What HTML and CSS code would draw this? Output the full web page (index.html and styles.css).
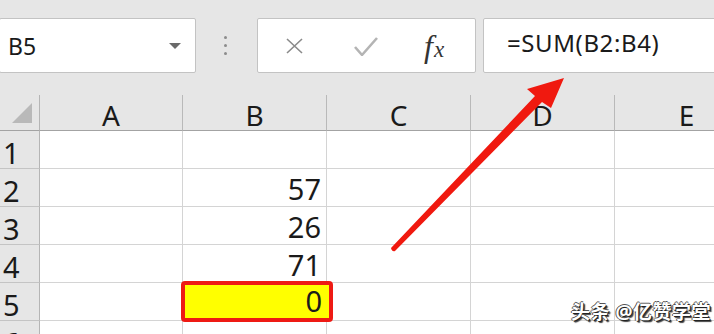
FILE: index.html
```html
<!DOCTYPE html>
<html lang="zh-CN">
<head>
	<meta charset="UTF-8">
	<title>SUM</title>
	<link rel="stylesheet" href="styles.css">
</head>
<body>
<div class="screen">
	<!-- 编辑栏 -->
	<div class="toolbar">
		<div class="namebox">
			<span>B5</span>
			<i class="caret"></i>
		</div>
		<div class="dots"><i></i><i></i><i></i></div>
		<div class="buttons">
			<svg class="btn" width="22" height="16" viewBox="0 0 22 16"><path d="M3 1 L18 15 M18 1 L3 15" stroke="#8a8a8a" stroke-width="1.6" fill="none"/></svg>
			<svg class="btn" width="26" height="20" viewBox="0 0 26 20"><path d="M2 11 L9 19 L24 2" stroke="#b4b4b4" stroke-width="2.6" fill="none" stroke-linejoin="round"/></svg>
			<span class="fx"><i>f</i><i class="x">x</i></span>
		</div>
		<div class="formula">=SUM(B2:B4)</div>
	</div>

	<!-- 表格 -->
	<div class="sheet">
		<div class="corner"><i></i></div>
		<div class="col">A</div>
		<div class="col">B</div>
		<div class="col">C</div>
		<div class="col">D</div>
		<div class="col">E</div>

		<div class="row">1</div><div class="cell"></div><div class="cell"></div><div class="cell"></div><div class="cell"></div><div class="cell"></div>
		<div class="row">2</div><div class="cell"></div><div class="cell num">57</div><div class="cell"></div><div class="cell"></div><div class="cell"></div>
		<div class="row">3</div><div class="cell"></div><div class="cell num">26</div><div class="cell"></div><div class="cell"></div><div class="cell"></div>
		<div class="row">4</div><div class="cell"></div><div class="cell num">71</div><div class="cell"></div><div class="cell"></div><div class="cell"></div>
		<div class="row">5</div><div class="cell"></div><div class="cell num active">0</div><div class="cell"></div><div class="cell"></div><div class="cell"></div>
		<div class="row">6</div><div class="cell"></div><div class="cell"></div><div class="cell"></div><div class="cell"></div><div class="cell"></div>
	</div>

	<!-- 红色箭头 -->
	<svg class="arrow" width="714" height="334" viewBox="0 0 714 334">
		<path d="M391 248 L535 96 L527 89 L564 78 L551 108 L542 102 L395 251 Q392 252 391 248 Z" fill="#f0190f"/>
	</svg>

	<div class="mark">头条 @亿赞学堂</div>
</div>
</body>
</html>
```

FILE: styles.css
```css
*{margin: 0;padding: 0;box-sizing: border-box;}
body{
	background: #fff;
	font-family: "Noto Sans", "Noto Sans CJK SC", sans-serif;
	color: #1a1a1a;
}
.screen{
	width: 714px;
	height: 334px;
	position: relative;
	overflow: hidden;
	background: #e6e6e6;
}

/*编辑栏*/
.toolbar{
	height: 95px;
	display: flex;
	padding-top: 18px;
}
.toolbar > div{
	height: 55px;
	background: #fff;
	border: 1px solid #c3c3c3;
	border-radius: 2px;
}
.namebox{
	width: 197px;
	margin-left: -1px;
	display: flex;
	align-items: center;
	justify-content: space-between;
	padding: 0 14px 0 8px;
	font-size: 23px;
}
.caret{
	width: 0;
	height: 0;
	border-left: 6px solid transparent;
	border-right: 6px solid transparent;
	border-top: 6px solid #6a6a6a;
}
.toolbar .dots{
	width: 61px;
	background: transparent;
	border: 0;
	display: flex;
	flex-direction: column;
	align-items: center;
	justify-content: center;
	gap: 5px;
	padding-right: 2px;
}
.dots i{
	width: 3px;
	height: 3px;
	border-radius: 50%;
	background: #8c8c8c;
}
.buttons{
	width: 219px;
	display: flex;
	align-items: center;
	padding-left: 26px;
}
.buttons .btn:nth-child(2){margin-left: 47px;}
.fx{
	margin-left: 45px;
	font-family: "Liberation Serif", serif;
	font-size: 32px;
	line-height: 1;
	color: #333;
}
.fx .x{font-size: 23px;margin-left: 1px;}
.formula{
	flex: 1;
	margin-left: 7px;
	margin-right: -6px;
	font-size: 24px;
	padding: 7px 0 0 23px;
	letter-spacing: 0.6px;
}

/*表格*/
.sheet{
	display: grid;
	grid-template-columns: 40px 143px 144px 144px 144px 144px;
	grid-template-rows: 36px repeat(6, 38px);
	background: #fff;
}
.corner,.col,.row{
	background: #e6e6e6;
}
.corner{
	border-right: 1px solid #b5b5b5;
	border-bottom: 1px solid #a3a3a3;
	padding: 8px 0 0 12px;
}
.corner i{
	display: block;
	width: 0;
	height: 0;
	border-left: 20px solid transparent;
	border-bottom: 20px solid #b9b9b9;
}
.col{
	border-right: 1px solid #b9b9b9;
	border-bottom: 1px solid #a3a3a3;
	text-align: center;
	font-size: 28px;
	line-height: 40px;
}
.row{
	border-right: 1px solid #b5b5b5;
	border-bottom: 1px solid #c4c4c4;
	font-size: 29px;
	line-height: 43px;
	padding-left: 3px;
}
.cell{
	border-right: 1px solid #d4d4d4;
	border-bottom: 1px solid #d4d4d4;
}
.num{
	text-align: right;
	padding-right: 5px;
	font-size: 29px;
	line-height: 40px;
}
.cell.active{
	position: relative;
	z-index: 2;
	margin: -2px -6px -1px -2px;
	background: #ffff00;
	border: 4px solid #ee1a14;
	border-radius: 4px;
	padding-right: 7px;
	line-height: 32px;
}

/*箭头和水印*/
.arrow{
	position: absolute;
	left: 0;
	top: 0;
	z-index: 5;
}
.mark{
	position: absolute;
	right: 3px;
	bottom: 9px;
	z-index: 6;
	font-size: 19px;
	font-weight: bold;
	letter-spacing: 0.5px;
	color: #fff;
	text-shadow: 1px 1px 0 #222, -1px 0 0 #555, 0 -1px 0 #555, 2px 2px 1px #444;
}
```
